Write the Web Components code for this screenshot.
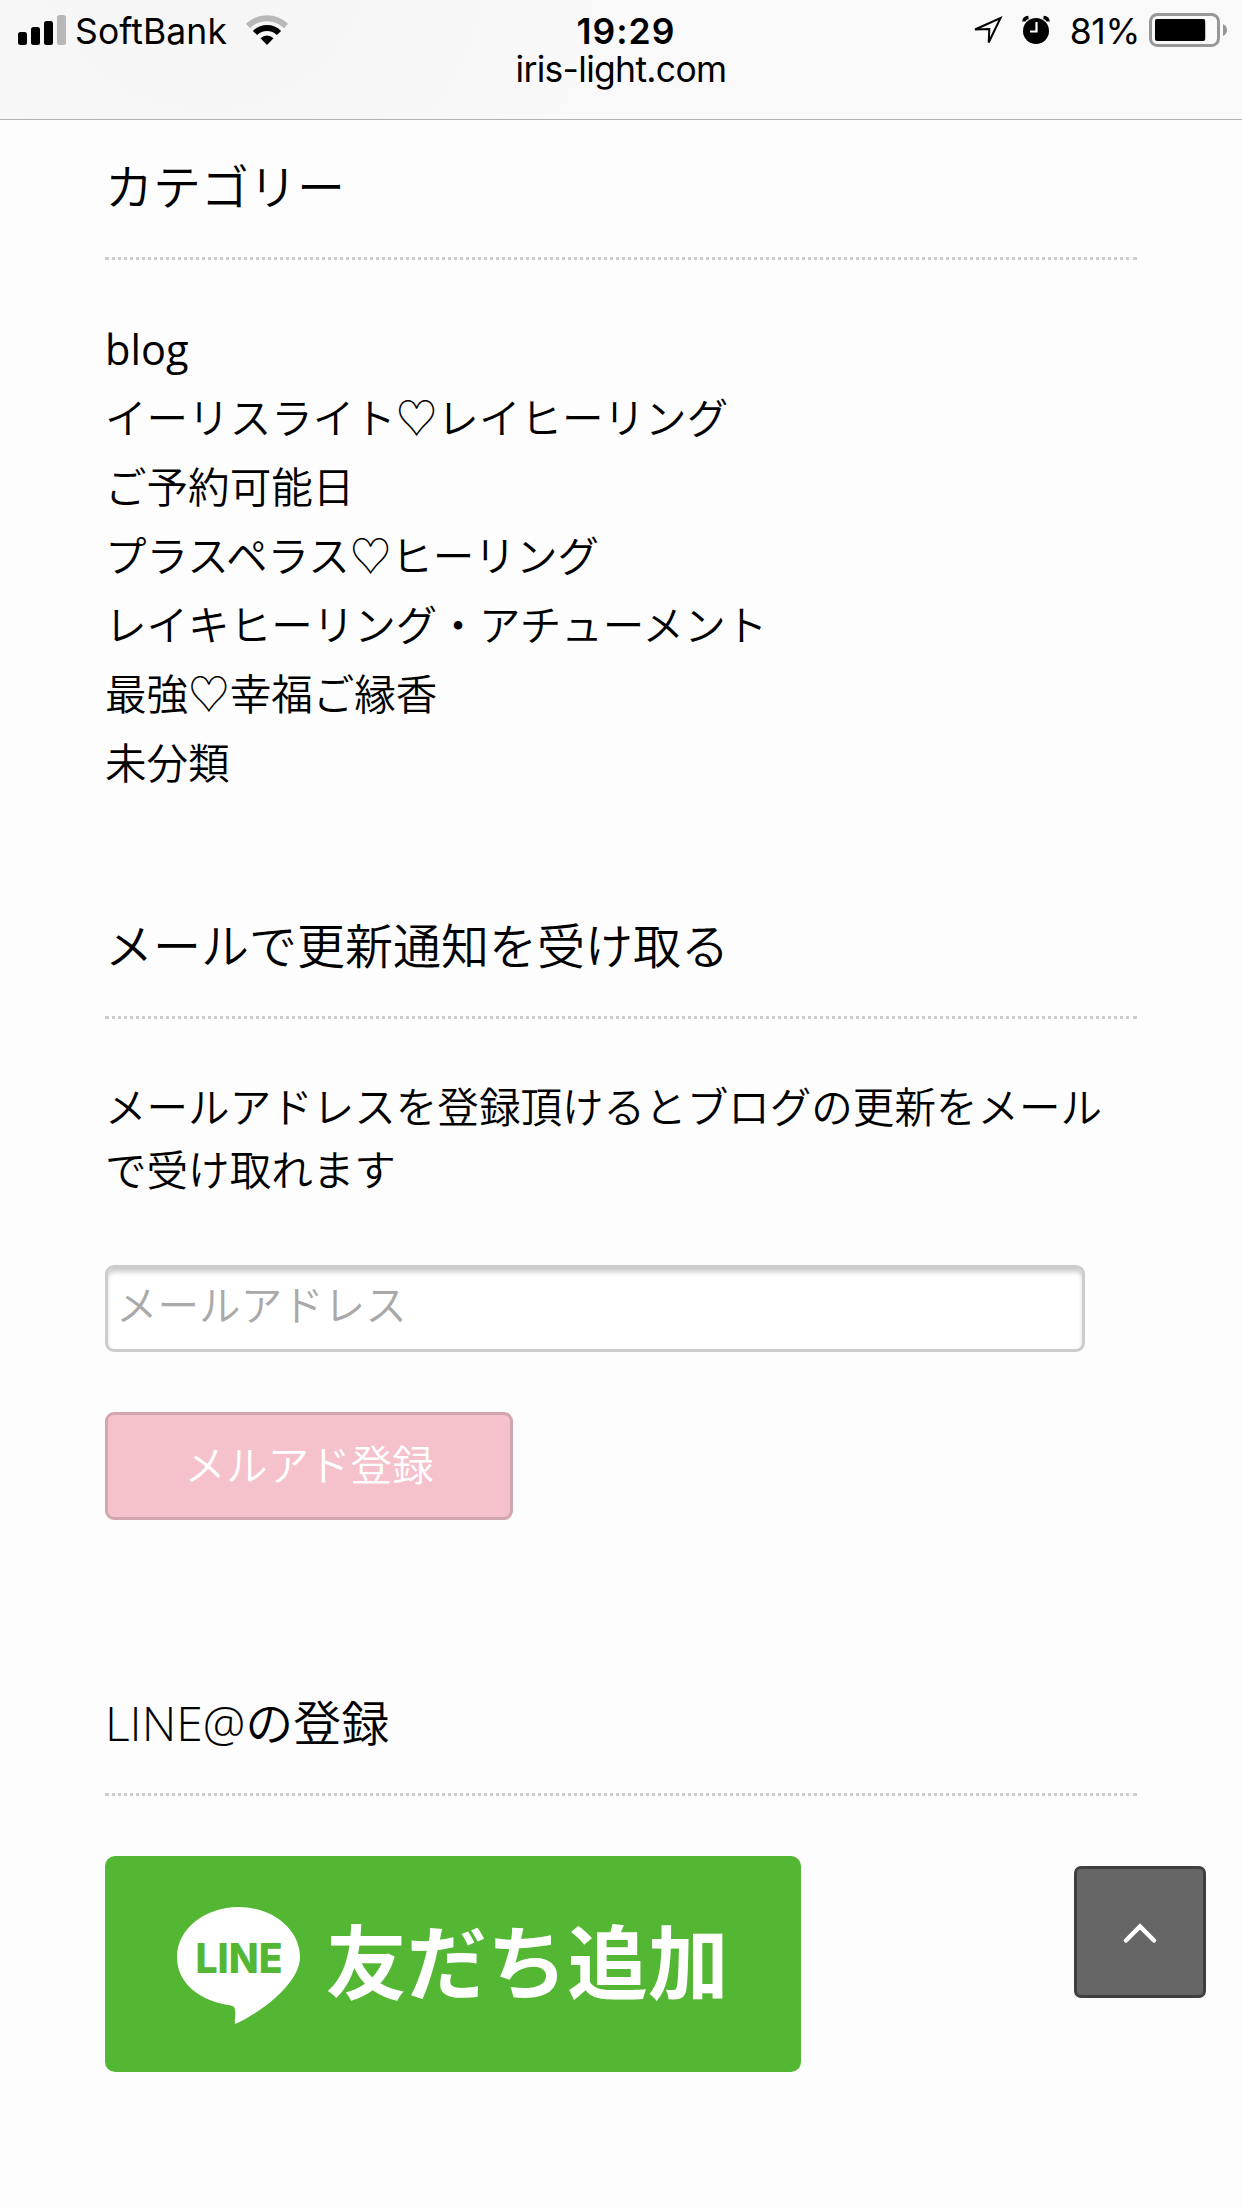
<!DOCTYPE html>
<html lang="ja">
<head>
<meta charset="utf-8">
<title>iris-light.com</title>
<style>
  body {
    margin: 0;
    min-height: 2208px;
    background: #fdfdfd;
    color: #000;
    font-family: "Open Sans", "Noto Sans CJK JP DemiLight", "Noto Sans CJK JP", sans-serif;
    font-size: 41.55px;
  }
</style>
</head>
<body>
<status-bar carrier="SoftBank" time="19:29" url="iris-light.com" battery="81"></status-bar>
<side-bar>
  <side-widget heading="カテゴリー" style="--gap: 55px">
    <category-list>
      <category-item>blog</category-item>
      <category-item>イーリスライト♡レイヒーリング</category-item>
      <category-item>ご予約可能日</category-item>
      <category-item>プラスペラス♡ヒーリング</category-item>
      <category-item>レイキヒーリング・アチューメント</category-item>
      <category-item>最強♡幸福ご縁香</category-item>
      <category-item>未分類</category-item>
    </category-list>
  </side-widget>
  <side-widget heading="メールで更新通知を受け取る" style="--gap: 57px; --space: 112px">
    <mail-form placeholder="メールアドレス" submit="メルアド登録">メールアドレスを登録頂けるとブログの更新をメールで受け取れます</mail-form>
  </side-widget>
  <side-widget heading="LINE@の登録" style="--gap: 60px; --space: 167px">
    <line-button>友だち追加</line-button>
  </side-widget>
</side-bar>
<page-top></page-top>

<script>
class StatusBar extends HTMLElement {
  constructor() {
    super();
    this.shadow = this.attachShadow({mode: 'open'});
  }

  connectedCallback() {
    this.render();
  }

  render() {
    const level = Number(this.getAttribute('battery'));
    this.shadow.innerHTML = `
      <style>
        :host {
          display: grid;
          grid-template-columns: 1fr auto 1fr;
          box-sizing: border-box;
          height: 120px;
          padding: 0 14px 0 18px;
          border-bottom: 1px solid #b2b2b2;
          background: radial-gradient(circle 400px at 205px -60px, #f5f5f5, #f9f9f9);
          font-family: Inter, "Liberation Sans", sans-serif;
          font-size: 35.5px;
          line-height: 38px;
          white-space: nowrap;
        }
        .side {
          display: flex;
          align-items: flex-start;
          padding-top: 13px;
        }
        .right {
          justify-content: flex-end;
        }
        .middle {
          padding-top: 13px;
          text-align: center;
        }
        .time {
          padding-left: 6px;
          font-weight: 600;
          letter-spacing: 1px;
        }
        .url {
          margin-left: -4px;
          letter-spacing: -0.7px;
        }
        svg {
          display: block;
          height: 36px;
          margin-top: -2px;
        }
        .carrier {
          margin: 0 18px 0 9px;
          letter-spacing: 0.1px;
        }
        .percent {
          margin: 0 9px 0 20px;
          letter-spacing: -0.3px;
        }
      </style>
      <div class="side">
        <svg width="48" height="36" viewBox="18 11 48 36">
          <rect x="18" y="32" width="9" height="13" rx="2.5"/>
          <rect x="31" y="27" width="9" height="18" rx="2.5"/>
          <rect x="44" y="21" width="9" height="24" rx="2.5"/>
          <rect x="57" y="15" width="9" height="30" rx="2.5" fill="#b8b8b8"/>
        </svg>
        <span class="carrier">${this.getAttribute('carrier')}</span>
        <svg width="44" height="36" viewBox="245 11 44 36" fill="none">
          <path d="M248 26a27 27 0 0 1 38 0" stroke="#b8b8b8" stroke-width="6"/>
          <path d="M255 33a17 17 0 0 1 24 0" stroke="#000" stroke-width="6"/>
          <path d="M267 45l-6.5-6.8a9.3 9.3 0 0 1 13 0z" fill="#000"/>
        </svg>
      </div>
      <div class="middle">
        <div class="time">${this.getAttribute('time')}</div>
        <div class="url">${this.getAttribute('url')}</div>
      </div>
      <div class="side right">
        <svg width="80" height="36" viewBox="970 11 80 36">
          <path d="M975 29.5L1000.5 18L988.7 42.5L989.3 29z" fill="none" stroke="#000" stroke-width="2"/>
          <circle cx="1036" cy="31" r="13"/>
          <path d="M1024 21.5q0-3.5 4.5-4M1048 21.5q0-3.5-4.5-4" fill="none" stroke="#000" stroke-width="3.5"/>
          <path d="M1036.5 22v9.5h-6.5" fill="none" stroke="#fff" stroke-width="2.2"/>
        </svg>
        <span class="percent">${level}%</span>
        <svg width="79" height="36" viewBox="1149 11 79 36">
          <rect x="1150.5" y="14.5" width="68" height="31" rx="7" fill="none" stroke="#979797" stroke-width="3"/>
          <rect x="1155" y="19" width="${62 * level / 100}" height="22" rx="2"/>
          <path d="M1223 24q4 2 4 6t-4 6z" fill="#979797"/>
        </svg>
      </div>
    `;
  }
}

class SideBar extends HTMLElement {
  constructor() {
    super();
    this.attachShadow({mode: 'open'}).innerHTML = `
      <style>
        :host {
          display: block;
          padding: 31px 105px 0;
        }
      </style>
      <slot></slot>
    `;
  }
}

class SideWidget extends HTMLElement {
  constructor() {
    super();
    this.shadow = this.attachShadow({mode: 'open'});
  }

  connectedCallback() {
    this.shadow.innerHTML = `
      <style>
        :host {
          display: block;
          margin-top: var(--space, 0);
        }
        h3 {
          margin: 0 0 var(--gap);
          padding-bottom: 34px;
          border-bottom: 3px dotted #ccc;
          font-size: 48px;
          font-weight: 300;
          line-height: 72px;
        }
      </style>
      <h3>${this.getAttribute('heading')}</h3>
      <slot></slot>
    `;
  }
}

class CategoryList extends HTMLElement {
  constructor() {
    super();
    this.attachShadow({mode: 'open'}).innerHTML = `
      <style>
        :host {
          display: flex;
          flex-direction: column;
        }
      </style>
      <slot></slot>
    `;
  }
}

class CategoryItem extends HTMLElement {
  constructor() {
    super();
    this.attachShadow({mode: 'open'}).innerHTML = `
      <style>
        :host {
          display: block;
          line-height: 69px;
        }
      </style>
      <slot></slot>
    `;
  }
}

class MailForm extends HTMLElement {
  constructor() {
    super();
    this.shadow = this.attachShadow({mode: 'open'});
  }

  connectedCallback() {
    this.shadow.innerHTML = `
      <style>
        :host {
          display: block;
        }
        p {
          margin: 0 0 63px;
          line-height: 63px;
        }
        form {
          display: flex;
          flex-direction: column;
          align-items: flex-start;
          gap: 60px;
        }
        input, button {
          box-sizing: border-box;
          margin: 0;
          border: 3px solid #ccc;
          border-radius: 9px;
          font: inherit;
          font-weight: 300;
        }
        input {
          width: 980px;
          height: 87px;
          padding: 0 8px 7px;
          background: #fff;
          box-shadow: inset 0 5px 5px -1px #ccc;
        }
        input::placeholder {
          color: #a9a9a9;
        }
        button {
          width: 408px;
          height: 108px;
          padding: 0 0 7px;
          border-color: #d1a6ae;
          background: #f5c1cb;
          color: #fff;
        }
      </style>
      <p><slot></slot></p>
      <form>
        <input type="email" placeholder="${this.getAttribute('placeholder')}">
        <button type="button">${this.getAttribute('submit')}</button>
      </form>
    `;
  }
}

class LineButton extends HTMLElement {
  constructor() {
    super();
    this.attachShadow({mode: 'open'}).innerHTML = `
      <style>
        :host {
          display: flex;
          align-items: flex-start;
          box-sizing: border-box;
          width: 696px;
          height: 216px;
          padding: 51px 0 0 72px;
          border-radius: 10px;
          background: #54b733;
          color: #fff;
        }
        svg {
          display: block;
          flex: none;
        }
        .label {
          margin: -5px 0 0 25px;
          font-family: "Noto Sans CJK JP", sans-serif;
          font-size: 80.5px;
          font-weight: 700;
          line-height: 112px;
          white-space: nowrap;
        }
      </style>
      <svg width="124" height="118" viewBox="0 0 124 118">
        <path d="M61.5 0C95 0 123 22 123 50C123 76 85 105 58 117C57 113 60 106 57 100C55 98 51 98.500 46 97C19 91 0 74 0 50C0 22 28 0 61.500 0z" fill="#fff"/>
        <text x="18.5" y="66" textLength="87" lengthAdjust="spacingAndGlyphs" font-family="Inter" font-size="41" font-weight="800" fill="#54b733">LINE</text>
      </svg>
      <span class="label"><slot></slot></span>
    `;
  }
}

class PageTop extends HTMLElement {
  constructor() {
    super();
    this.attachShadow({mode: 'open'}).innerHTML = `
      <style>
        :host {
          position: fixed;
          right: 36px;
          bottom: 210px;
          display: flex;
          align-items: center;
          justify-content: center;
          box-sizing: border-box;
          width: 132px;
          height: 132px;
          padding: 4px 1px 0 0;
          border: 3px solid #3f3f3f;
          border-radius: 7px;
          background: #666;
        }
      </style>
      <svg width="36" height="22" viewBox="0 0 36 22">
        <path d="M4 17.5L18 3.5L32 17.5" fill="none" stroke="#fff" stroke-width="4.5" stroke-linecap="round"/>
      </svg>
    `;
  }
}

customElements.define('status-bar', StatusBar);
customElements.define('side-bar', SideBar);
customElements.define('side-widget', SideWidget);
customElements.define('category-list', CategoryList);
customElements.define('category-item', CategoryItem);
customElements.define('mail-form', MailForm);
customElements.define('line-button', LineButton);
customElements.define('page-top', PageTop);
</script>
</body>
</html>
